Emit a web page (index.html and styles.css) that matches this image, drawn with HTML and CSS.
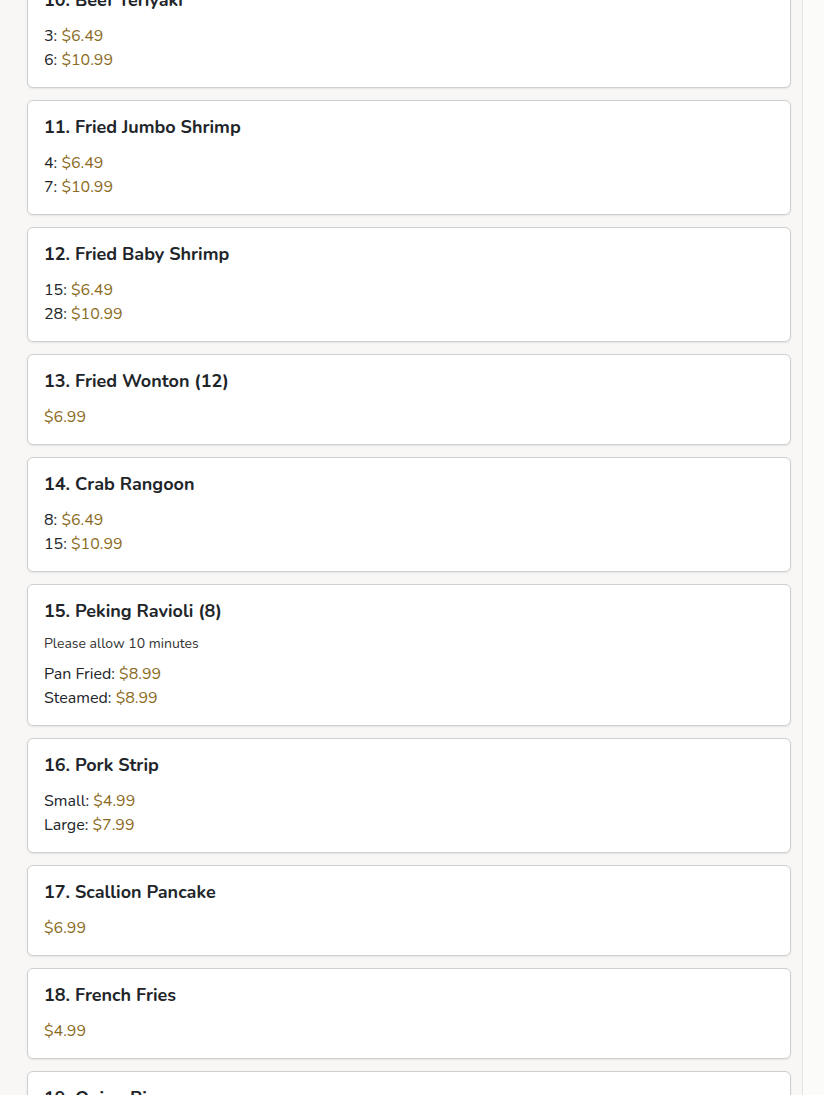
FILE: index.html
```html
<!DOCTYPE html>
<html lang="en">
<head>
<meta charset="utf-8">
<link rel="stylesheet" href="styles.css">
<title>Menu</title>
</head>
<body>
<div class="page">
  <div class="panel">
    <div class="list">
      <div class="card first">
        <h3 class="title">10. Beef Teriyaki</h3>
        <div class="prices">
          <div class="line">3: <span class="price">$6.49</span></div>
          <div class="line">6: <span class="price">$10.99</span></div>
        </div>
      </div>
      <div class="card">
        <h3 class="title">11. Fried Jumbo Shrimp</h3>
        <div class="prices">
          <div class="line">4: <span class="price">$6.49</span></div>
          <div class="line">7: <span class="price">$10.99</span></div>
        </div>
      </div>
      <div class="card">
        <h3 class="title">12. Fried Baby Shrimp</h3>
        <div class="prices">
          <div class="line">15: <span class="price">$6.49</span></div>
          <div class="line">28: <span class="price">$10.99</span></div>
        </div>
      </div>
      <div class="card">
        <h3 class="title">13. Fried Wonton (12)</h3>
        <div class="prices">
          <div class="line"><span class="price">$6.99</span></div>
        </div>
      </div>
      <div class="card">
        <h3 class="title">14. Crab Rangoon</h3>
        <div class="prices">
          <div class="line">8: <span class="price">$6.49</span></div>
          <div class="line">15: <span class="price">$10.99</span></div>
        </div>
      </div>
      <div class="card">
        <h3 class="title">15. Peking Ravioli (8)</h3>
        <p class="note">Please allow 10 minutes</p>
        <div class="prices">
          <div class="line">Pan Fried: <span class="price">$8.99</span></div>
          <div class="line">Steamed: <span class="price">$8.99</span></div>
        </div>
      </div>
      <div class="card">
        <h3 class="title">16. Pork Strip</h3>
        <div class="prices">
          <div class="line">Small: <span class="price">$4.99</span></div>
          <div class="line">Large: <span class="price">$7.99</span></div>
        </div>
      </div>
      <div class="card">
        <h3 class="title">17. Scallion Pancake</h3>
        <div class="prices">
          <div class="line"><span class="price">$6.99</span></div>
        </div>
      </div>
      <div class="card">
        <h3 class="title">18. French Fries</h3>
        <div class="prices">
          <div class="line"><span class="price">$4.99</span></div>
        </div>
      </div>
      <div class="card">
        <h3 class="title">19. Onion Rings</h3>
        <div class="prices">
          <div class="line"><span class="price">$4.99</span></div>
        </div>
      </div>
    </div>
  </div>
</div>
</body>
</html>
```

FILE: styles.css
```css
html, body {
  margin: 0;
  padding: 0;
  background: #fbfbfa;
  height: 1095px;
  overflow: hidden;
}
body {
  font-family: "Nunito", "Lato", "Noto Sans", sans-serif;
  color: #212529;
}
.page {
  width: 803px;
}
.panel {
  background: #f8f7f5;
  border-right: 1px solid #e2e2e0;
  padding: 0 11px 0 27px;
}
.list {
  display: flex;
  flex-direction: column;
  gap: 12px;
  margin-top: -27px;
}
.card {
  background: #fff;
  border: 1px solid #cfcfcf;
  border-radius: 6px;
  box-shadow: 0 1px 2px rgba(0,0,0,0.08);
  padding: 16px 16px 15px;
}
.title {
  margin: 0 0 12px;
  font-size: 18px;
  line-height: 21px;
  font-weight: 700;
  color: #212529;
}
.note {
  margin: 0 0 8px;
  font-size: 14px;
  line-height: 19px;
  color: #333;
}
.prices {
  display: flex;
  flex-direction: column;
  padding-top: 1px;
}
.line {
  font-size: 16px;
  line-height: 24px;
  color: #212529;
}
.price {
  color: #8b6b23;
}
```
